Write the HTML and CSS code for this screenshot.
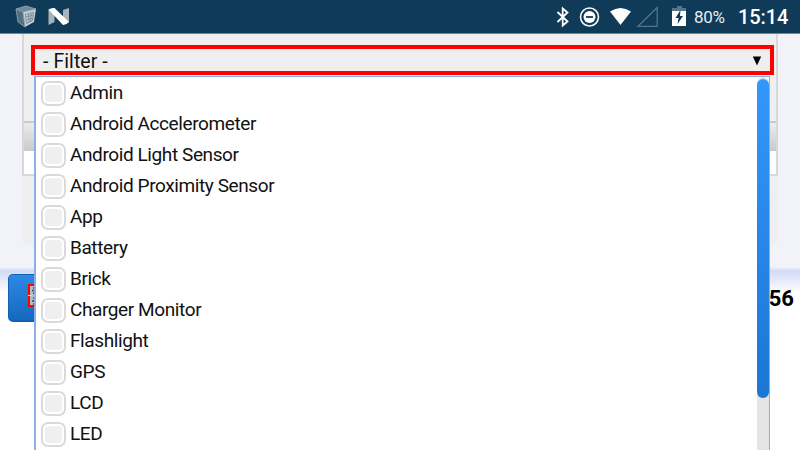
FILE: index.html
```html
<!DOCTYPE html>
<html lang="en">
<head>
<meta charset="utf-8">
<title>Filter</title>
<link rel="stylesheet" href="styles.css">
</head>
<body>
<header class="status">
  <svg class="notices" width="60" height="33" viewBox="0 0 60 33">
    <path d="M1 9l10-3 10 3-10 4z" fill="#718998"/>
    <path d="M1 9l7 3 2 15-7-5z" fill="#536f82"/>
    <path d="M8 12l13-3-2 13-9 5z" fill="#c3cdd3"/>
    <path d="M1 9l10-3 10 3-13 3zM8 12l2 15-7-5L1 9" fill="none" stroke="#9baab4" stroke-width=".8"/>
    <path d="M10.500 14.500l8-2-1 8-6 3zM11 17l7-2M11.500 20l6-2M13.500 14l.5 8M16 13.500l-.2 8" fill="none" stroke="#5e798a" stroke-width=".7"/>
    <path d="M33.500 9.500l6-1.500v14l-6 3zM48 10l6-2v14l-6 3z" fill="#a5b3bc"/>
    <path d="M33.500 9.500q3-2 6-1.500L54 22q-2.500 3-6 3z" fill="#fff"/>
  </svg>
  <div class="system">
    <svg width="140" height="33" viewBox="550 0 140 33">
      <path d="M557.500 12l10 9.500-4.800 4V8.500l4.800 4-10 9.500" fill="none" stroke="#fff" stroke-width="1.800"/>
      <circle cx="589.500" cy="17" r="9" fill="none" stroke="#fff" stroke-width="1.500"/>
      <circle cx="589.500" cy="17" r="6" fill="#fff"/>
      <path d="M586 17h7" stroke="#0f3a58" stroke-width="1.800"/>
      <path d="M610 11.500q10.500-7 21 0L620.500 25z" fill="#fff"/>
      <path d="M638 26.300L657.200 7.500v18.800z" fill="none" stroke="#577488" stroke-width="1.300"/>
      <path d="M677 6h5v2h4v6h-14V8h5z" fill="#577488"/>
      <path d="M672 11h14v15h-14z" fill="#fff"/>
      <path d="M680.500 10l-5 8h3l-1 6 5.500-8h-3z" fill="#0f3a58"/>
    </svg>
    <span class="charge">80%</span>
    <time class="clock">15:14</time>
  </div>
</header>
<main class="page">
  <section class="panel">
    <div class="card">
      <div class="filter">
        <div class="select"><span>- Filter -</span><svg width="10" height="10" viewBox="0 0 10 10"><path d="M.8.500h8.400L5 9.500z"/></svg></div>
        <div class="menu">
          <ul class="options">
            <li><i></i><span>Admin</span></li>
            <li><i></i><span>Android Accelerometer</span></li>
            <li><i></i><span>Android Light Sensor</span></li>
            <li><i></i><span>Android Proximity Sensor</span></li>
            <li><i></i><span>App</span></li>
            <li><i></i><span>Battery</span></li>
            <li><i></i><span>Brick</span></li>
            <li><i></i><span>Charger Monitor</span></li>
            <li><i></i><span>Flashlight</span></li>
            <li><i></i><span>GPS</span></li>
            <li><i></i><span>LCD</span></li>
            <li><i></i><span>LED</span></li>
          </ul>
          <div class="track"><div class="thumb"></div></div>
        </div>
      </div>
      <div class="strip"></div>
      <div class="row"></div>
    </div>
  </section>
  <footer class="footer">
    <div class="button">
      <svg width="12" height="24" viewBox="0 0 12 24"><path d="M1 1h11v21H1z" fill="#bbb" stroke="#f00" stroke-width="2"/><path d="M5 4h6M4 6.500h7M5 9h6M5 14h6M4 17h7M5 20h6" stroke="#444" stroke-width="1.300"/><path d="M0 11.500h4" stroke="#ddd"/></svg>
    </div>
    <div class="number">56</div>
  </footer>
</main>
</body>
</html>
```
FILE: styles.css
```css
* { box-sizing: border-box; }
body {
  margin: 0;
  height: 450px;
  overflow: hidden;
  background: #f1f3f8;
  color: #111;
  font-family: Roboto, sans-serif;
}
.status {
  display: flex;
  justify-content: space-between;
  height: 34px;
  padding-left: 15px;
  background: #0f3a58;
  border-bottom: 1px solid #718799;
  color: #fff;
}
.system { display: flex; width: 250px; line-height: 35px; }
.system svg { flex: none; }
.charge { width: 48px; padding-left: 4px; font-size: 17px; letter-spacing: -.3px; color: #e8edf0; }
.clock { font-size: 20px; font-weight: 500; letter-spacing: -.1px; white-space: nowrap; }
.page { height: 416px; display: flex; flex-direction: column; }
.panel {
  flex: none;
  height: 211px;
  margin: 0 22px 22px;
  background: #efefef;
  border-radius: 0 0 6px 6px;
}
.card { height: 142px; border: 2px solid #d8d8d8; border-width: 0 2px 2px; }
.filter { position: relative; height: 87px; padding: 11px 2px 0 7px; }
.select {
  display: flex;
  justify-content: space-between;
  align-items: center;
  height: 30px;
  border: 4px solid #f00;
  padding: 2px 8px 0 8px;
  background: #efefef;
  font-size: 19.500px;
  line-height: 20px;
}
.select span { padding-top: 1px; letter-spacing: .08px; }
.strip { height: 30px; border-top: 2px solid #cacaca; background: linear-gradient(#ececec, #c9c9c9); }
.row { height: 23px; background: #fff; }
.menu {
  position: absolute;
  z-index: 1;
  top: 42px;
  left: 10px;
  width: 736px;
  height: 390px;
  display: flex;
  justify-content: space-between;
  border: 2px solid #8dadeb;
  border-width: 1px 1px 0 2px;
  background: #fff;
}
.options { margin: 0; padding: 1px 0 0 5px; list-style: none; }
.options li {
  display: flex;
  align-items: center;
  height: 31px;
  font-size: 19px;
  letter-spacing: -.4px;
  white-space: nowrap;
}
.options span { padding-bottom: 2px; }
.options i {
  width: 25px;
  height: 25px;
  margin: 0 4px 1px 0;
  padding: 2px;
  border: 2px solid #dadada;
  border-radius: 7px;
  background: #fff;
}
.options i::before { content: ""; display: block; width: 17px; height: 17px; border-radius: 4px; background: #efefef; }
.track { width: 12px; height: 100%; padding-top: 2px; background: #e4e4e4; border-radius: 6px 6px 0 0; }
.thumb { height: 319px; border-radius: 6px; background: linear-gradient(#3497fc, #1b76d4); }
.footer {
  flex: 1;
  display: flex;
  justify-content: space-between;
  padding: 7px 6px 0 8px;
  background: linear-gradient(#f1f3f8 0, #d2daf6 4px, #fff 26px);
}
.button {
  width: 60px;
  height: 48px;
  padding: 9px 0 0 19px;
  border: 2px solid #1461b2;
  border-width: 1px 1px 2px;
  border-radius: 5px;
  background: linear-gradient(#2c89e5, #1668bf);
}
.number { padding-top: 12px; font-size: 22px; line-height: 26px; font-weight: 700; color: #000; }
```
